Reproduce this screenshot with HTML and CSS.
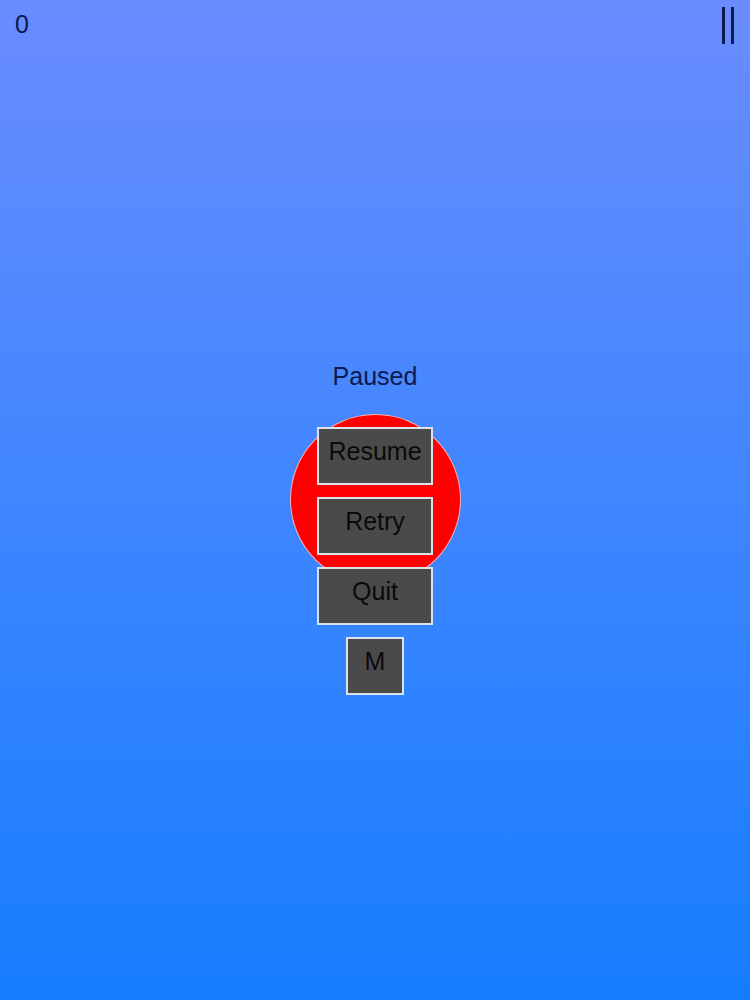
FILE: index.html
```html
<!DOCTYPE html>
<html>
<head>
<meta charset="utf-8">
<link rel="stylesheet" href="styles.css">
</head>
<body>
<div class="screen">
  <header class="hud">
    <div class="score">0</div>
    <div class="pause" aria-label="Pause"><span class="bar"></span><span class="bar"></span></div>
  </header>
  <main class="menu">
    <div class="title">Paused</div>
    <div class="stack">
      <div class="blob"></div>
      <div class="btn">Resume</div>
      <div class="btn">Retry</div>
      <div class="btn">Quit</div>
      <div class="btn small">M</div>
    </div>
  </main>
</div>
</body>
</html>
```
FILE: styles.css
```css
html, body {
  margin: 0;
  padding: 0;
}
body {
  font-family: "Liberation Sans", Arial, sans-serif;
}
.screen {
  width: 750px;
  height: 1000px;
  background: linear-gradient(to bottom, #6a8cff 0%, #3f86ff 50%, #167dff 100%);
  display: flex;
  flex-direction: column;
  overflow: hidden;
}
.hud {
  display: flex;
  justify-content: space-between;
  align-items: flex-start;
  padding: 0 16px 0 15px;
  height: 44px;
}
.score {
  font-size: 25px;
  line-height: 30px;
  margin-top: 9px;
  color: #0c1a4e;
}
.pause {
  display: flex;
  gap: 6px;
  margin-top: 7px;
}
.bar {
  width: 3px;
  height: 37px;
  background: #0c1a4e;
}
.menu {
  display: flex;
  flex-direction: column;
  align-items: center;
  padding-top: 317px;
}
.title {
  font-size: 25px;
  line-height: 30px;
  color: #0c1a4e;
  margin-bottom: 36px;
}
.stack {
  position: relative;
  display: flex;
  flex-direction: column;
  align-items: center;
  gap: 12px;
  width: 116px;
}
.blob {
  position: absolute;
  top: -13px;
  left: -27px;
  width: 171px;
  height: 171px;
  box-sizing: border-box;
  border-radius: 50%;
  background: #ff0000;
  border: 1px solid rgba(255, 220, 220, 0.8);
}
.btn {
  position: relative;
  box-sizing: border-box;
  width: 116px;
  height: 58px;
  border: 2px solid rgba(235, 245, 255, 0.9);
  background: #4a4a4a;
  color: #0a0a0a;
  font-size: 25px;
  line-height: 44px;
  text-align: center;
}
.btn.small {
  width: 58px;
}
```
